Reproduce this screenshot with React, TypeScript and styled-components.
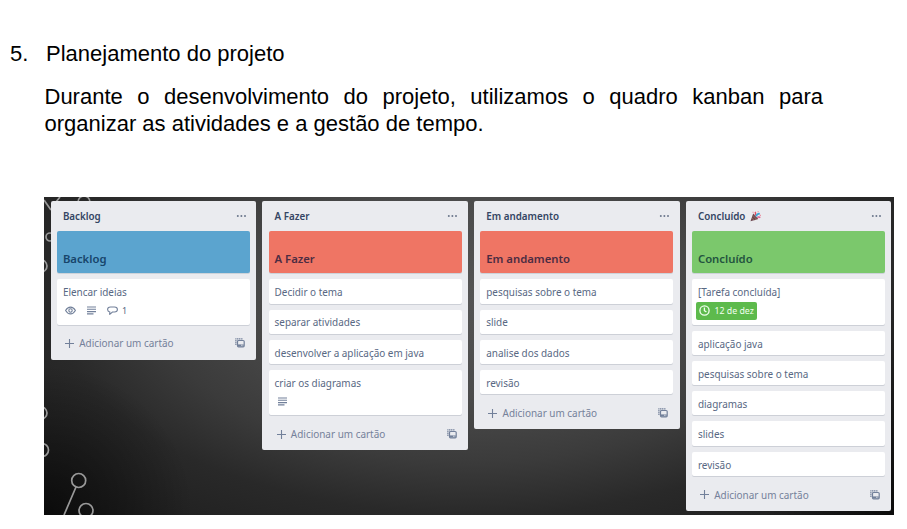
import React from "react";
import styled, { createGlobalStyle } from "styled-components";

const GlobalStyle = createGlobalStyle`
  * { box-sizing: border-box; }
  body { margin: 0; background: #fff; overflow: hidden; }
`;

const Page = styled.main`
  width: 907px;
  height: 529px;
  padding: 40px 0 0;
  background: #fff;
  color: #000;
  font-family: "Liberation Sans", Arial, sans-serif;
`;

const Heading = styled.h1`
  display: grid;
  grid-template-columns: 36px 1fr;
  margin: 0 0 0 10px;
  font-size: 22px;
  line-height: 27px;
  font-weight: 400;
`;

const Paragraph = styled.p`
  width: 778.5px;
  margin: 16px 0 0 44.5px;
  font-size: 22px;
  line-height: 27px;
  text-align: justify;
`;

const Board = styled.section`
  position: relative;
  width: 850px;
  height: 318px;
  margin: 60px 0 0 44px;
  padding: 4px 0 0 6.7px;
  overflow: hidden;
  background:
    radial-gradient(ellipse 150px 150px at 0% 100%, rgba(0, 0, 0, 0.6), transparent),
    radial-gradient(ellipse 130px 250px at 100% 100%, rgba(0, 0, 0, 0.6), transparent),
    radial-gradient(
      ellipse 640px 330px at 430px 100px,
      #545454 0%,
      #4b4b4b 30%,
      #3b3b3b 50%,
      #292929 66%,
      #222 80%,
      #181818 100%
    );
  font-family: "Noto Sans", "Open Sans", sans-serif;
`;

const Network = styled.svg`
  position: absolute;
  inset: 0;
  width: 850px;
  height: 318px;
  fill: none;
  stroke: #999;
  stroke-width: 1.7;
`;

const Lists = styled.div`
  position: relative;
  display: flex;
  align-items: flex-start;
  gap: 6.2px;
`;

const List = styled.section`
  flex: 0 0 205.5px;
  padding: 0 6.2px;
  border-radius: 2px;
  background: #eaebef;
`;

const ListHeader = styled.header`
  display: flex;
  align-items: center;
  justify-content: space-between;
  height: 30px;
  padding: 0.4px 3.5px 0 6px;
`;

const ListTitle = styled.h2`
  display: flex;
  align-items: center;
  gap: 5px;
  margin: 0;
  padding-top: 1.4px;
  color: #344563;
  font-size: 9.8px;
  line-height: 14px;
  font-weight: 600;
`;

const Cards = styled.div`
  display: flex;
  flex-direction: column;
  gap: 6px;
`;

const Cover = styled.div<{ $color: string; $ink: string }>`
  display: flex;
  align-items: flex-end;
  height: 42.3px;
  padding: 0 6px 6px;
  border-radius: 2px;
  background: ${(p) => p.$color};
  box-shadow: 0 1px 0 #cdd3da;
  color: ${(p) => p.$ink};
  font-size: 11.3px;
  line-height: 16px;
  font-weight: 600;
`;

const Card = styled.article<{ $tall?: boolean }>`
  height: ${(p) => (p.$tall ? "45.4px" : "24.25px")};
  padding: 4.9px 6px 0;
  border-radius: 2px;
  background: #fff;
  box-shadow: 0 1px 0 #cdd0d7;
  color: #586883;
  font-size: 9.93px;
  line-height: 16px;
  white-space: nowrap;
`;

const Badges = styled.div`
  display: flex;
  align-items: center;
  gap: 10px;
  height: 21px;
  padding-left: 2px;
  font-size: 9px;
`;

const CommentBadge = styled.span`
  display: flex;
  align-items: center;
  gap: 4px;
`;

const DueBadge = styled.div`
  display: flex;
  align-items: center;
  gap: 4px;
  width: 61.5px;
  height: 18px;
  margin: 1.5px 0 0 -2px;
  padding-left: 3.5px;
  border-radius: 2px;
  background: #5dba4c;
  color: #f2fff0;
  font-size: 8.8px;
`;

const AddRow = styled.footer`
  display: flex;
  align-items: center;
  height: 35px;
  padding: 2.5px 5px 0 8px;
  color: #75819a;
  font-size: 9.95px;
`;

const AddLabel = styled.span`
  flex: 1;
  padding-left: 5.3px;
  white-space: nowrap;
`;

const Icon = styled.svg`
  display: block;
  flex: none;
  fill: none;
  stroke: #72809a;
  stroke-width: 1.1;
`;

const MoreIcon = () => (
  <Icon width="11" height="5" viewBox="0 0 11 5">
    <g fill="#6b778c" stroke="none">
      <circle cx="1.8" cy="2" r="1" />
      <circle cx="5.4" cy="2" r="1" />
      <circle cx="9" cy="2" r="1" />
    </g>
  </Icon>
);

const EyeIcon = () => (
  <Icon width="11" height="9" viewBox="0 0 11 9">
    <path d="M.6 4.5C2 2 3.5 1.1 5.5 1.1S9 2 10.4 4.5C9 7 7.5 7.9 5.5 7.9S2 7 .6 4.5Z" />
    <circle cx="5.5" cy="4.5" r="1.7" />
  </Icon>
);

const TextIcon = () => (
  <Icon width="11" height="9" viewBox="0 0 11 9">
    <path d="M1 1h9M1 3.3h9M1 5.6h9M1 7.9h6.5" />
  </Icon>
);

const CommentIcon = () => (
  <Icon width="11" height="9" viewBox="0 0 11 9">
    <path d="M3.5 1h4c1.8 0 2.9 1 2.9 2.5S9.3 6 7.5 6H5.4L2.8 8.3V6C1.4 5.7.6 4.9.6 3.5.6 2 1.7 1 3.5 1Z" />
  </Icon>
);

const ClockIcon = () => (
  <Icon width="11" height="11" viewBox="0 0 11 11">
    <g stroke="#f2fff0" strokeWidth="1.3">
      <circle cx="5.5" cy="5.5" r="4.6" />
      <path d="M5.4 2.5v3.2l2 1.2" />
    </g>
  </Icon>
);

const PlusIcon = () => (
  <Icon width="9" height="9" viewBox="0 0 9 9">
    <path d="M4.5 0v9M0 4.5h9" />
  </Icon>
);

const TemplateIcon = () => (
  <Icon width="10" height="10" viewBox="0 0 10 10">
    <path d="M.9 7V.9h7" strokeDasharray="1.3 .5" strokeWidth="1.2" />
    <rect x="2.5" y="2.5" width="6.7" height="6.3" rx="1" strokeWidth="1.2" />
    <path d="M3 7.4h5.7" strokeWidth="2" />
    <path d="M6.2 7.3h1.3" stroke="#eaebef" />
  </Icon>
);

const PartyIcon = () => (
  <Icon width="11" height="11" viewBox="0 0 11 11">
    <path d="M.5 10.3 3.2 2.5 8.3 8Z" fill="#6d4750" stroke="none" />
    <path d="m2.8 4.5 4 4M1.9 7l2.3 2.3" stroke="#a8815c" strokeWidth=".6" />
    <path d="M5 4.5c1-1 .8-2.3.2-3.6" stroke="#e34f64" strokeWidth="1.5" />
    <path d="M6.2 5.3c.3-1.9 1.5-2.5 3.6-2.7" stroke="#38a6d8" strokeWidth="1.7" />
    <path d="M7.2 6.4c1.1-.7 2.1-.6 3.1.2" stroke="#e35b8b" strokeWidth="1.5" />
    <path d="M7.6.8h1M2.6 1.3h.9M9.8 4.4h.9" stroke="#ec7385" />
  </Icon>
);

type CardData = { text: string; badge?: "activity" | "text" | "due" };
type ListData = { title: string; color: string; ink: string; party?: boolean; cards: CardData[] };

const lists: ListData[] = [
  {
    title: "Backlog",
    color: "#5ba4cf",
    ink: "#17456b",
    cards: [{ text: "Elencar ideias", badge: "activity" }],
  },
  {
    title: "A Fazer",
    color: "#ef7564",
    ink: "#4c2c42",
    cards: [
      { text: "Decidir o tema" },
      { text: "separar atividades" },
      { text: "desenvolver a aplicação em java" },
      { text: "criar os diagramas", badge: "text" },
    ],
  },
  {
    title: "Em andamento",
    color: "#ef7564",
    ink: "#4c2c42",
    cards: [
      { text: "pesquisas sobre o tema" },
      { text: "slide" },
      { text: "analise dos dados" },
      { text: "revisão" },
    ],
  },
  {
    title: "Concluído",
    color: "#7bc86c",
    ink: "#23543f",
    party: true,
    cards: [
      { text: "[Tarefa concluída]", badge: "due" },
      { text: "aplicação java" },
      { text: "pesquisas sobre o tema" },
      { text: "diagramas" },
      { text: "slides" },
      { text: "revisão" },
    ],
  },
];

const CardBadge = ({ kind }: { kind: CardData["badge"] }) => {
  if (kind === "activity")
    return (
      <Badges>
        <EyeIcon />
        <TextIcon />
        <CommentBadge>
          <CommentIcon />1
        </CommentBadge>
      </Badges>
    );
  if (kind === "text")
    return (
      <Badges>
        <TextIcon />
      </Badges>
    );
  if (kind === "due")
    return (
      <DueBadge>
        <ClockIcon />
        12 de dez
      </DueBadge>
    );
  return null;
};

export default function App() {
  return (
    <Page>
      <GlobalStyle />
      <Heading>
        <span>5.</span>
        <span>Planejamento do projeto</span>
      </Heading>
      <Paragraph>
        Durante o desenvolvimento do projeto, utilizamos o quadro kanban para organizar as atividades e a gestão de
        tempo.
      </Paragraph>
      <Board>
        <Network viewBox="0 0 850 318">
          <path d="m0 3 7 10M16 0l-4 5M32 290 20 318" />
          <circle cx="40" cy="5" r="6" />
          <circle cx="6" cy="40" r="4" />
          <circle cx="-3" cy="69" r="6" />
          <circle cx="-3" cy="216" r="6" />
          <circle cx="-2" cy="253" r="6.5" />
          <circle cx="34.7" cy="283.5" r="7" />
          <circle cx="42" cy="313.5" r="7" />
        </Network>
        <Lists>
          {lists.map((list) => (
            <List key={list.title}>
              <ListHeader>
                <ListTitle>
                  {list.title}
                  {list.party && <PartyIcon />}
                </ListTitle>
                <MoreIcon />
              </ListHeader>
              <Cards>
                <Cover $color={list.color} $ink={list.ink}>
                  {list.title}
                </Cover>
                {list.cards.map((card) => (
                  <Card key={card.text} $tall={Boolean(card.badge)}>
                    {card.text}
                    <CardBadge kind={card.badge} />
                  </Card>
                ))}
              </Cards>
              <AddRow>
                <PlusIcon />
                <AddLabel>Adicionar um cartão</AddLabel>
                <TemplateIcon />
              </AddRow>
            </List>
          ))}
        </Lists>
      </Board>
    </Page>
  );
}
